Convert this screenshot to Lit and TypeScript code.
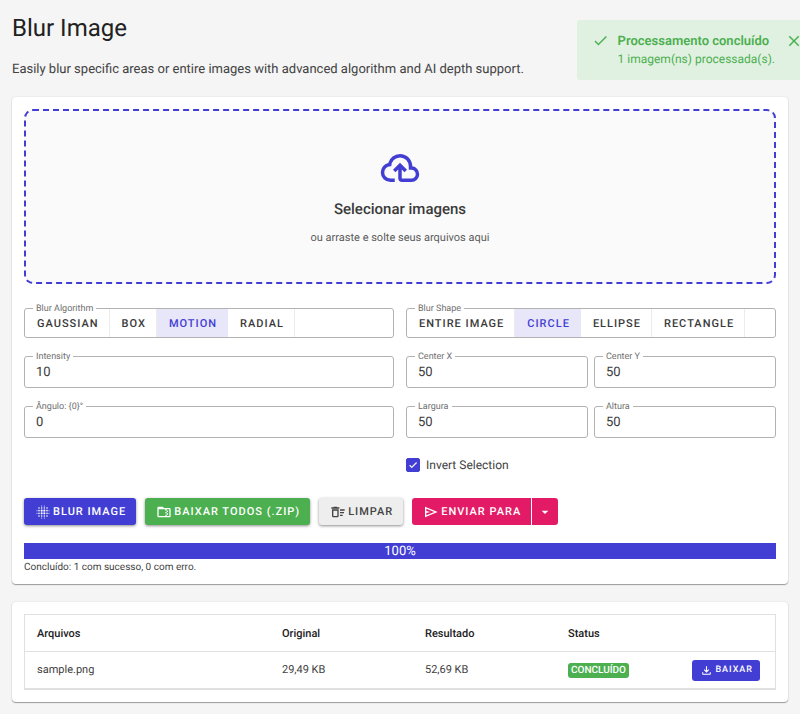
import { LitElement, html, css, svg } from "lit";
import { customElement, property, state } from "lit/decorators.js";
import { classMap } from "lit/directives/class-map.js";

const ICONS = {
  cloud:
    "M6.5 20Q4.22 20 2.61 18.43 1 16.85 1 14.58 1 12.63 2.17 11.1 3.35 9.57 5.25 9.15 5.88 6.85 7.75 5.43 9.63 4 12 4 14.93 4 16.96 6.04 19 8.07 19 11 20.73 11.2 21.86 12.5 23 13.78 23 15.5 23 17.38 21.69 18.69 20.38 20 18.5 20H13Q12.18 20 11.59 19.41 11 18.83 11 18V12.85L9.4 14.4L8 13L12 9L16 13L14.6 14.4L13 12.85V18H18.5Q19.55 18 20.27 17.27 21 16.55 21 15.5 21 14.45 20.27 13.73 19.55 13 18.5 13H17V11Q17 8.93 15.54 7.46 14.08 6 12 6 9.93 6 8.46 7.46 7 8.93 7 11H6.5Q5.05 11 4.03 12.03 3 13.05 3 14.5 3 15.95 4.03 17 5.05 18 6.5 18H9V20Z",
  zip: "M20 6H12L10 4H4C2.9 4 2 4.9 2 6V18C2 19.1 2.9 20 4 20H20C21.1 20 22 19.1 22 18V8C22 6.9 21.1 6 20 6M20 18H16V16H14V18H4V8H14V10H16V8H20V18M16 12V10H18V12H16M14 12H16V14H14V12M18 16H16V14H18V16Z",
  sweep:
    "M15,16H19V18H15V16M15,8H22V10H15V8M15,12H21V14H15V12M11,10V18H5V10H11M13,8H3V18A2,2 0 0,0 5,20H11A2,2 0 0,0 13,18V8M14,5H11L10,4H6L5,5H2V7H14V5Z",
  send: "M3 20V4L22 12M5 17L16.85 12L5 7V10.5L11 12L5 13.5M5 17V7 13.5Z",
  download:
    "M12 16L7 11L8.4 9.55L11 12.15V4H13V12.15L15.6 9.55L17 11ZM6 20Q5.18 20 4.59 19.41 4 18.83 4 18V15H6V18H18V15H20V18Q20 18.83 19.41 19.41 18.83 20 18 20Z",
  caret: "M7,10L12,15L17,10H7Z",
  check: "M21,7L9,19L3.5,13.5L4.91,12.09L9,16.17L19.59,5.59L21,7Z",
  close:
    "M19,6.41L17.59,5L12,10.59L6.41,5L5,6.41L10.59,12L5,17.59L6.41,19L12,13.41L17.59,19L19,17.59L13.41,12L19,6.41Z",
};

const icon = (d: string, cls: string) =>
  html`<svg class="icon ${cls}" viewBox="0 0 24 24" aria-hidden="true"><path d=${d}></path></svg>`;

/* Grid of dots that fade in size towards the edge: [x, y, radius]. */
const BLUR_DOTS: number[][] = [];
for (const a of [10, 14]) {
  for (const b of [10, 14]) BLUR_DOTS.push([a, b, 1.6]);
  for (const b of [6, 18]) BLUR_DOTS.push([a, b, 1.2], [b, a, 1.2]);
  for (const b of [3, 21]) BLUR_DOTS.push([a, b, 0.8], [b, a, 0.8]);
}
for (const a of [6, 18]) for (const b of [6, 18]) BLUR_DOTS.push([a, b, 1.2]);

const base = css`
  *,
  *::before,
  *::after {
    box-sizing: border-box;
  }
  button,
  input {
    font: inherit;
    color: inherit;
    margin: 0;
    text-rendering: inherit;
  }
  .icon {
    display: block;
    flex: none;
    fill: currentColor;
  }
`;

const notch = css`
  .frame {
    position: relative;
    border: 1px solid #b2b2b2;
    border-radius: 3px;
    min-width: 0;
    margin: 0;
    padding: 0;
    background: #fff;
  }
  .caption {
    position: absolute;
    top: -6px;
    left: 8px;
    padding: 0 3px;
    background: #fff;
    color: #6f6f6f;
    font-size: 9px;
    line-height: 12px;
    white-space: nowrap;
  }
`;

@customElement("outlined-field")
export class OutlinedField extends LitElement {
  @property() label = "";
  @property() value = "";

  static styles = [
    base,
    notch,
    css`
      :host {
        display: block;
        min-width: 0;
      }
      .input {
        display: block;
        width: 100%;
        height: 30px;
        padding: 1px 11px 0;
        border: 0;
        outline: 0;
        background: none;
        color: #3a3a3a;
        font-size: 13px;
      }
    `,
  ];

  render() {
    return html`<div class="frame">
      <label class="caption" for="value">${this.label}</label>
      <input class="input" id="value" type="text" inputmode="numeric" .value=${this.value} />
    </div>`;
  }
}

@customElement("segment-group")
export class SegmentGroup extends LitElement {
  @property() label = "";
  @property({ attribute: false }) options: string[] = [];
  @property() value = "";

  static styles = [
    base,
    notch,
    css`
      :host {
        display: block;
        min-width: 0;
      }
      .frame {
        display: flex;
        height: 30px;
      }
      .segment {
        border: 0;
        border-right: 1px solid #ececec;
        padding: 1px 10px 0 12px;
        background: none;
        color: #3a3a3a;
        font-size: 11px;
        font-weight: 500;
        letter-spacing: 1px;
        text-transform: uppercase;
        white-space: nowrap;
        cursor: pointer;
      }
      .selected {
        background: #e8e6f9;
        color: #423ed3;
        border-color: #e8e6f9;
      }
    `,
  ];

  render() {
    return html`<div class="frame" role="group" aria-labelledby="caption">
      <span class="caption" id="caption">${this.label}</span>
      ${this.options.map(
        (o) => html`<button
          type="button"
          class=${classMap({ segment: true, selected: o === this.value })}
          aria-pressed=${o === this.value}
          @click=${() => (this.value = o)}
        >
          ${o}
        </button>`,
      )}
    </div>`;
  }
}

@customElement("app-root")
export class AppRoot extends LitElement {
  @state() private toastOpen = true;
  @state() private progress = 100;

  static styles = [
    base,
    css`
      :host {
        display: block;
        position: relative;
        min-height: 100vh;
        overflow-x: hidden;
        padding: 12px;
        background: #f5f5f5;
        color: #424242;
        font-family: Roboto, "Liberation Sans", sans-serif;
        font-size: 11px;
        line-height: 16px;
        text-rendering: geometricPrecision;
      }
      .title {
        margin: 0;
        color: #212121;
        font-size: 24px;
        line-height: 32px;
        font-weight: 400;
      }
      .lead {
        margin: 18px 0 19px;
        font-size: 13px;
      }
      .card {
        padding: 12px;
        border-radius: 4px;
        background: #fff;
        box-shadow: 0 1px 1px rgba(0, 0, 0, 0.35), 0 0 2px rgba(0, 0, 0, 0.12);
      }
      .card + .card {
        margin-top: 18px;
      }
      .dropzone {
        display: flex;
        flex-direction: column;
        align-items: center;
        justify-content: center;
        width: 100%;
        min-height: 175px;
        padding: 0;
        border: 2px dashed #423ed3;
        border-radius: 9px;
        background: #fafafa;
        color: #5c5c5c;
        cursor: pointer;
      }
      .cloud {
        width: 42px;
        height: 42px;
        color: #423ed3;
      }
      .drop-title {
        margin: 10px 0 11px;
        color: #3a3a3a;
        font-size: 15px;
        line-height: 20px;
        font-weight: 500;
      }
      .form {
        display: grid;
        grid-template-columns: 1fr 1fr;
        gap: 18px 12px;
        margin-top: 24px;
      }
      .pair {
        display: grid;
        grid-template-columns: 1fr 1fr;
        gap: 6px;
      }
      .tick {
        grid-column: 2;
        display: flex;
        align-items: center;
        gap: 6px;
        justify-self: start;
        padding: 1px 0;
        font-size: 12px;
      }
      .tick-mark {
        position: relative;
        display: flex;
        color: #fff;
      }
      .tick-box {
        appearance: none;
        width: 14px;
        height: 14px;
        border: 1px solid #423ed3;
        border-radius: 2px;
        background: #fff;
      }
      .tick-box:checked {
        background: #423ed3;
      }
      .tick-icon {
        position: absolute;
        inset: 2px;
        width: 10px;
        height: 10px;
        stroke: currentColor;
        pointer-events: none;
      }
      .actions {
        display: flex;
        flex-wrap: wrap;
        gap: 9px;
        margin: 24px 0 18px;
      }
      .btn {
        display: flex;
        align-items: center;
        gap: 2px;
        height: 27px;
        padding: 1px 10px 0 11px;
        border: 0;
        border-radius: 3px;
        color: #fff;
        font-size: 11px;
        font-weight: 500;
        letter-spacing: 1px;
        text-transform: uppercase;
        white-space: nowrap;
        cursor: pointer;
      }
      .raised {
        box-shadow: 0 1px 3px rgba(0, 0, 0, 0.45);
      }
      .primary {
        background: #423ed3;
      }
      .success {
        background: #4caf50;
      }
      .neutral {
        background: #eee;
        color: #424242;
      }
      .accent {
        background: #e31b66;
      }
      .split {
        display: flex;
        gap: 1px;
      }
      .split-main {
        border-radius: 3px 0 0 3px;
      }
      .split-toggle {
        padding: 0 5px;
        border-radius: 0 3px 3px 0;
      }
      .small {
        width: 16px;
        height: 16px;
      }
      .progress {
        position: relative;
        height: 16px;
        background: #d9d8f6;
        color: #fff;
        font-size: 13px;
        text-align: center;
      }
      .bar {
        height: 100%;
        background: #423ed3;
      }
      .percent {
        position: absolute;
        inset: 1px 0 0;
      }
      .summary {
        margin: 0;
        padding-top: 4px;
        font-size: 10px;
        line-height: 9px;
      }
      .table {
        width: 100%;
        border: 1px solid #e0e0e0;
        border-bottom-width: 2px;
        border-spacing: 0;
        table-layout: fixed;
      }
      .size-col {
        width: 143px;
      }
      .status-col {
        width: 120px;
      }
      .action-col {
        width: 99px;
      }
      th,
      td {
        height: 36px;
        padding: 0 12px;
        text-align: left;
      }
      th {
        height: 37px;
        padding-top: 2px;
        border-bottom: 1px solid #e0e0e0;
        color: #212121;
        font-weight: 500;
      }
      .badge {
        display: inline-block;
        padding: 0 3px;
        border-radius: 3px;
        background: #4caf50;
        color: #fff;
        font-size: 10px;
        font-weight: 500;
        line-height: 15px;
        vertical-align: middle;
      }
      .download {
        height: 21px;
        margin-left: auto;
        margin-right: 3px;
        padding: 0 7px 0 8px;
        font-size: 9px;
      }
      .tiny {
        width: 13px;
        height: 13px;
      }
      .toast {
        position: absolute;
        top: 20px;
        right: 0;
        display: flex;
        align-items: flex-start;
        height: 60px;
        padding: 12px 0 0 15px;
        border-radius: 3px 0 0 3px;
        background: #e0f1e1;
        color: #4caf50;
        font-size: 12px;
        line-height: 18px;
      }
      .toast-check {
        width: 17px;
        height: 17px;
      }
      .toast-text {
        margin: 0 10px 0 9px;
      }
      .toast-title {
        padding-top: 1px;
        font-size: 13px;
        line-height: 17px;
        font-weight: 600;
      }
      .toast-close {
        padding: 0;
        margin-right: -3px;
        border: 0;
        background: none;
        cursor: pointer;
      }
      .cross {
        width: 18px;
        height: 18px;
      }
    `,
  ];

  render() {
    return html`
      <header>
        <h1 class="title">Blur Image</h1>
        <p class="lead">
          Easily blur specific areas or entire images with advanced algorithm and AI depth support.
        </p>
      </header>

      <section class="card">
        <button class="dropzone" type="button">
          ${icon(ICONS.cloud, "cloud")}
          <span class="drop-title">Selecionar imagens</span>
          <span>ou arraste e solte seus arquivos aqui</span>
        </button>

        <div class="form">
          <segment-group
            label="Blur Algorithm"
            .options=${["Gaussian", "Box", "Motion", "Radial"]}
            value="Motion"
          ></segment-group>
          <segment-group
            label="Blur Shape"
            .options=${["Entire Image", "Circle", "Ellipse", "Rectangle"]}
            value="Circle"
          ></segment-group>
          <outlined-field label="Intensity" value="10"></outlined-field>
          <div class="pair">
            <outlined-field label="Center X" value="50"></outlined-field>
            <outlined-field label="Center Y" value="50"></outlined-field>
          </div>
          <outlined-field label="Ângulo: {0}°" value="0"></outlined-field>
          <div class="pair">
            <outlined-field label="Largura" value="50"></outlined-field>
            <outlined-field label="Altura" value="50"></outlined-field>
          </div>
          <label class="tick">
            <span class="tick-mark">
              <input class="tick-box" type="checkbox" checked />
              ${icon(ICONS.check, "tick-icon")}
            </span>
            Invert Selection
          </label>
        </div>

        <div class="actions">
          <button class="btn primary raised" type="button">
            <svg class="icon small" viewBox="0 0 24 24" aria-hidden="true">
              ${BLUR_DOTS.map(([x, y, r]) => svg`<circle cx=${x} cy=${y} r=${r}></circle>`)}
            </svg>
            Blur Image
          </button>
          <button class="btn success raised" type="button">
            ${icon(ICONS.zip, "small")} Baixar todos (.zip)
          </button>
          <button class="btn neutral raised" type="button">
            ${icon(ICONS.sweep, "small")} Limpar
          </button>
          <div class="split">
            <button class="btn accent split-main" type="button">
              ${icon(ICONS.send, "small")} Enviar para
            </button>
            <button class="btn accent split-toggle" type="button" aria-label="Mais destinos">
              ${icon(ICONS.caret, "small")}
            </button>
          </div>
        </div>

        <div
          class="progress"
          role="progressbar"
          aria-valuemin="0"
          aria-valuemax="100"
          aria-valuenow=${this.progress}
        >
          <div class="bar" style="width:${this.progress}%"></div>
          <span class="percent">${this.progress}%</span>
        </div>
        <p class="summary">Concluído: 1 com sucesso, 0 com erro.</p>
      </section>

      <section class="card">
        <table class="table">
          <colgroup>
            <col />
            <col class="size-col" />
            <col class="size-col" />
            <col class="status-col" />
            <col class="action-col" />
          </colgroup>
          <thead>
            <tr>
              <th scope="col">Arquivos</th>
              <th scope="col">Original</th>
              <th scope="col">Resultado</th>
              <th scope="col" colspan="2">Status</th>
            </tr>
          </thead>
          <tbody>
            <tr>
              <td>sample.png</td>
              <td>29,49 KB</td>
              <td>52,69 KB</td>
              <td><span class="badge">CONCLUÍDO</span></td>
              <td>
                <button class="btn primary download" type="button">
                  ${icon(ICONS.download, "tiny")} Baixar
                </button>
              </td>
            </tr>
          </tbody>
        </table>
      </section>

      ${this.toastOpen
        ? html`<aside class="toast" role="status">
            ${icon(ICONS.check, "toast-check")}
            <div class="toast-text">
              <div class="toast-title">Processamento concluído</div>
              <div>1 imagem(ns) processada(s).</div>
            </div>
            <button
              class="toast-close"
              type="button"
              aria-label="Fechar"
              @click=${() => (this.toastOpen = false)}
            >
              ${icon(ICONS.close, "cross")}
            </button>
          </aside>`
        : null}
    `;
  }
}
